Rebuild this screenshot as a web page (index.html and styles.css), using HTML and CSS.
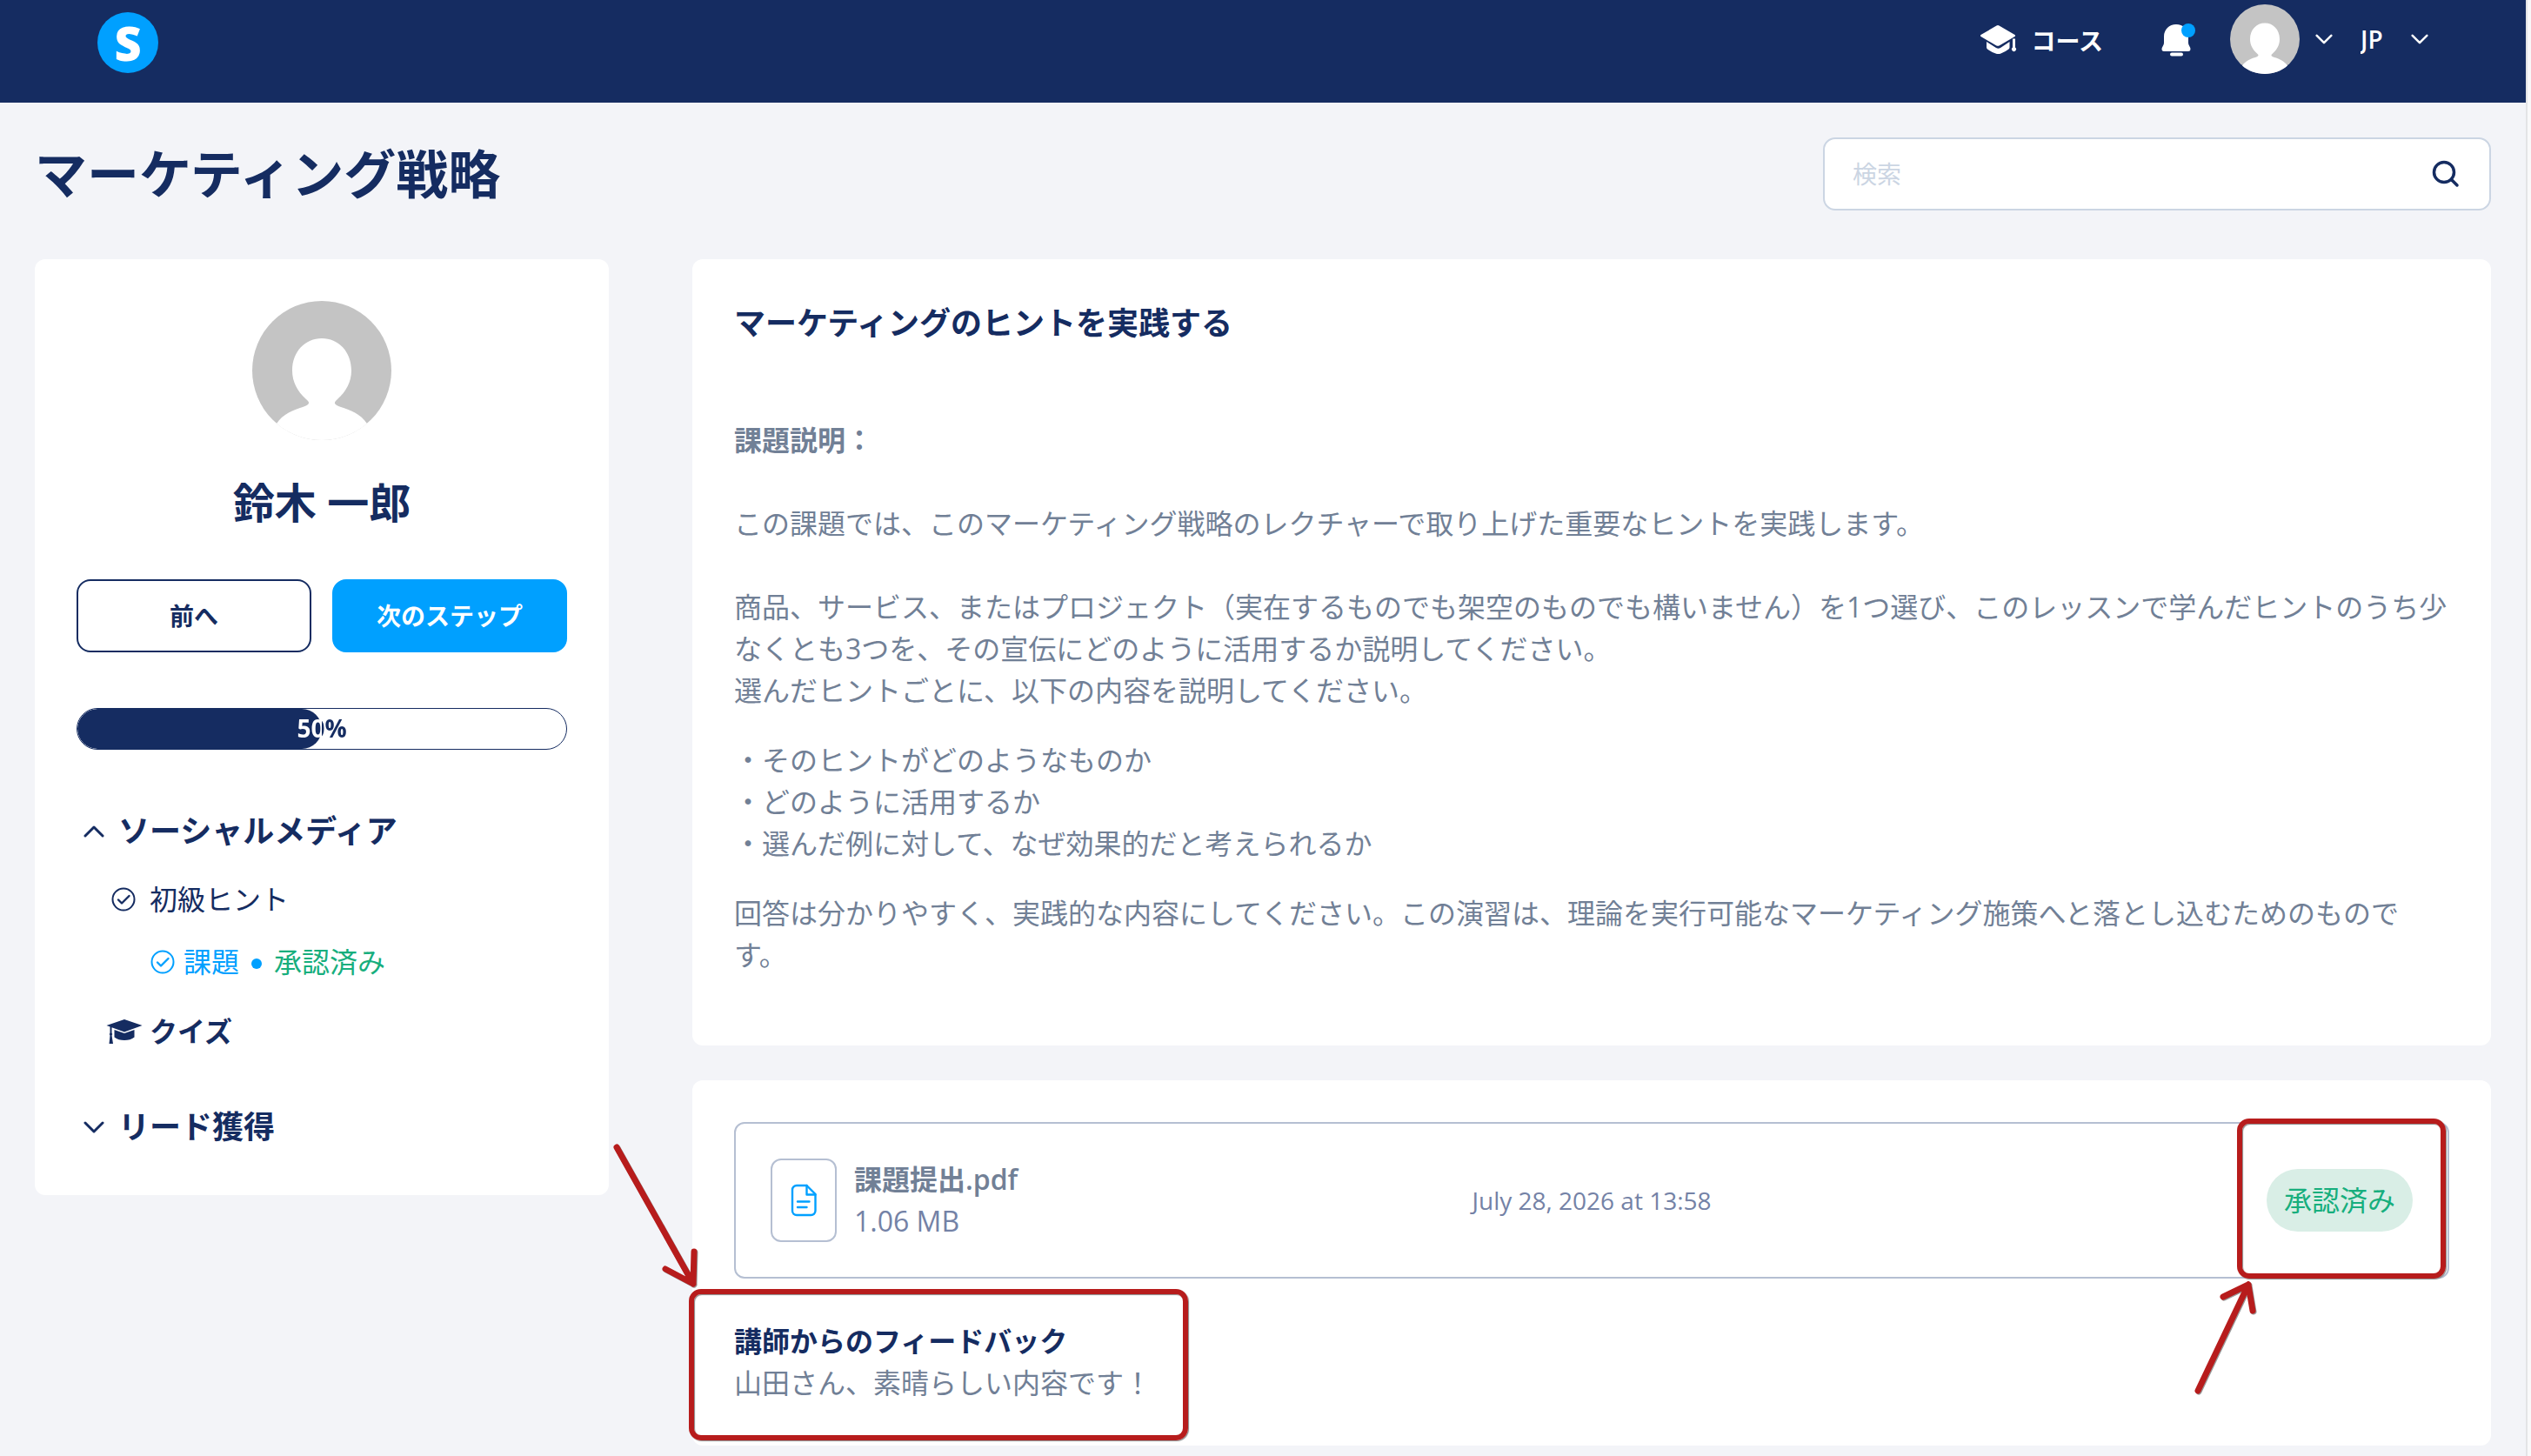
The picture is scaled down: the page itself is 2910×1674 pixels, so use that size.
FILE: index.html
```html
<!DOCTYPE html>
<html lang="ja">
<head>
<meta charset="utf-8">
<meta name="viewport" content="width=device-width, initial-scale=1">
<title>マーケティング戦略</title>
<link rel="stylesheet" href="styles.css">
</head>
<body>
<svg class="sprite" aria-hidden="true">
  <symbol id="avatar" viewBox="0 0 160 160">
    <circle cx="80" cy="80" r="80" fill="#c4c4c4"/>
    <path d="M28 141C35 130 48 125 58 122C66 119 67 117 62 113C52 104 46 93 46 80C46 58 61 43 80 43S114 58 114 80C114 93 108 104 98 113C93 117 94 119 102 122C112 125 125 130 132 141C118 153 100 160 80 160S42 153 28 141Z" fill="#fff"/>
  </symbol>
  <symbol id="chevron" viewBox="0 0 24 16">
    <path d="M2 3l10 10L22 3" fill="none" stroke="currentColor" stroke-width="3" stroke-linecap="round" stroke-linejoin="round"/>
  </symbol>
  <symbol id="check" viewBox="0 0 28 28">
    <g fill="none" stroke="currentColor" stroke-width="2" stroke-linecap="round" stroke-linejoin="round"><circle cx="14" cy="14" r="12.5"/><path d="M8 14.5l4 4 8.500-8.500" stroke-width="2.400"/></g>
  </symbol>
</svg>
<div class="page">
  <header class="topbar">
    <a class="logo" href="#" aria-label="ホーム">S</a>
    <nav class="nav">
      <a class="nav-link" href="#">
        <svg class="nav-icon" viewBox="0 0 44 44" fill="currentColor" aria-hidden="true">
          <path d="M20.500 6.500q1.500-.9 3 0l18 10.500q1.200 1 0 2L24 29.300q-2 1-4 0L2.500 19q-1.200-1 0-2z"/>
          <path d="M9 25l11 7q2.500 1.300 5 0l10.500-7v6.500q0 1.200-1 2Q30 37 25.500 38.400q-3 1-6 0Q14.500 37 10 33.500q-1-.8-1-2z"/>
          <path d="M39 21.500h3v10a2.500 2.500 0 1 1-3 0z"/>
        </svg>
        <span class="nav-text">コース</span>
      </a>
      <button class="bell" type="button" aria-label="通知">
        <svg class="nav-icon" viewBox="0 0 44 44" aria-hidden="true">
          <path fill="#fff" d="M22 5c8 0 14 6 14 14v7c0 2 1 3.500 2 5.500.8 1.500.8 4.500-2 4.500H8c-2.800 0-2.800-3-2-4.500 1-2 2-3.500 2-5.500v-7C8 11 14 5 22 5z"/>
          <rect fill="#fff" x="15" y="37.500" width="15" height="4" rx="2"/>
          <circle cx="36" cy="12" r="8" fill="#00a0ff"/>
        </svg>
      </button>
      <button class="account" type="button" aria-label="アカウント">
        <svg class="account-avatar" aria-hidden="true"><use href="#avatar"/></svg>
        <svg class="chevron-small" aria-hidden="true"><use href="#chevron"/></svg>
      </button>
      <label class="language">
        <select aria-label="言語"><option>JP</option></select>
        <svg class="chevron-small" aria-hidden="true"><use href="#chevron"/></svg>
      </label>
    </nav>
  </header>

  <main class="content">
    <div class="page-head">
      <h1>マーケティング戦略</h1>
      <form class="search" role="search">
        <input type="search" placeholder="検索" aria-label="検索">
        <button type="submit" aria-label="検索する">
          <svg viewBox="0 0 32 32" aria-hidden="true"><g fill="none" stroke="currentColor" stroke-width="3.500" stroke-linecap="round"><circle cx="14" cy="14" r="11.500"/><path d="M23 23l6 6"/></g></svg>
        </button>
      </form>
    </div>

    <div class="columns">
      <aside class="card sidebar">
        <svg class="profile-avatar" aria-hidden="true"><use href="#avatar"/></svg>
        <h2 class="profile-name">鈴木 一郎</h2>
        <div class="steps">
          <button class="btn btn-outline" type="button">前へ</button>
          <button class="btn btn-primary" type="button">次のステップ</button>
        </div>
        <div class="progress" role="progressbar" aria-valuenow="50" aria-valuemin="0" aria-valuemax="100">
          <div class="progress-fill" style="width: 50%"></div>
          <span class="progress-label">50%</span>
        </div>
        <button class="chapter" type="button" aria-expanded="true">
          <svg class="chevron chevron-up" aria-hidden="true"><use href="#chevron"/></svg>ソーシャルメディア
        </button>
        <ul class="lessons">
          <li class="lesson">
            <a href="#"><svg class="check" aria-hidden="true"><use href="#check"/></svg>初級ヒント</a>
          </li>
          <li class="task">
            <a href="#"><svg class="check" aria-hidden="true"><use href="#check"/></svg>課題</a>
            <span class="dot"></span>
            <span class="approved">承認済み</span>
          </li>
          <li class="quiz">
            <a href="#">
              <svg class="quiz-icon" viewBox="0 0 42 32" fill="currentColor" aria-hidden="true">
                <path d="M21 2L41.500 9 21 16.500 6.500 11.300v6.200q1.500 1.500 0 3L8 30H3.500l1-9.500q-1.500-1.500 0-3V10.500L.5 9z"/>
                <path d="M9.500 14L21 18l11.500-4v8.500Q28 26 21 26T9.500 22.500z"/>
              </svg>クイズ</a>
          </li>
        </ul>
        <button class="chapter" type="button" aria-expanded="false">
          <svg class="chevron" aria-hidden="true"><use href="#chevron"/></svg>リード獲得
        </button>
      </aside>

      <div class="main-column">
        <article class="card assignment">
          <h2>マーケティングのヒントを実践する</h2>
          <p><strong>課題説明：</strong><br><br>この課題では、このマーケティング戦略のレクチャーで取り上げた重要なヒントを実践します。<br><br>商品、サービス、またはプロジェクト（実在するものでも架空のものでも構いません）を1つ選び、このレッスンで学んだヒントのうち少なくとも3つを、その宣伝にどのように活用するか説明してください。<br>選んだヒントごとに、以下の内容を説明してください。</p>
          <p>・そのヒントがどのようなものか<br>・どのように活用するか<br>・選んだ例に対して、なぜ効果的だと考えられるか</p>
          <p>回答は分かりやすく、実践的な内容にしてください。この演習は、理論を実行可能なマーケティング施策へと落とし込むためのものです。</p>
        </article>

        <section class="card">
          <div class="submission">
            <div class="file">
              <span class="file-tile">
                <svg viewBox="0 0 30 38" aria-hidden="true"><g fill="none" stroke="currentColor" stroke-width="2.400" stroke-linecap="round" stroke-linejoin="round"><path d="M7 2h11.500L28.500 12v19a5 5 0 0 1-5 5H7a5 5 0 0 1-5-5V7a5 5 0 0 1 5-5z"/><path d="M18.500 2v10.500h10M8 20.500h13.500M8 27h10.500"/></g></svg>
              </span>
              <div>
                <a class="file-name" href="#">課題提出.pdf</a>
                <div class="file-size">1.06 MB</div>
              </div>
            </div>
            <time class="date" datetime="2026-07-28T13:58">July 28, 2026 at 13:58</time>
            <div class="status"><span class="badge">承認済み</span></div>
            <div class="callout callout-status"></div>
            <svg class="arrow arrow-status" viewBox="0 0 80 136" aria-hidden="true"><path d="M11 129L69 7M40 21L69 7l5 30"/></svg>
          </div>
          <div class="feedback">
            <h3>講師からのフィードバック</h3>
            <div>山田さん、素晴らしい内容です！</div>
            <div class="callout callout-feedback"></div>
            <svg class="arrow arrow-feedback" viewBox="0 0 104 170" aria-hidden="true"><path d="M7 7l88 157M63 147l32 17 1-37"/></svg>
          </div>
        </section>
      </div>
    </div>
  </main>
</div>
</body>
</html>
```

FILE: styles.css
```css
:root {
  --navy: #152c61;
  --blue: #00a0ff;
  --green: #17ae7d;
  --slate: #718096;
  --line: #b5bfd2;
  --red: #b71c1c;
}

* {
  box-sizing: border-box;
}

html {
  background: #f9f9fa;
}

body {
  margin: 0;
  color: var(--slate);
  font: 32px/48px "Open Sans", "Noto Sans CJK JP", sans-serif;
  text-spacing-trim: space-all;
}

h1, h2, h3, p, ul {
  margin: 0;
  padding: 0;
}

a {
  color: inherit;
  text-decoration: none;
}

button, input, select {
  margin: 0;
  padding: 0;
  border: 0;
  background: none;
  color: inherit;
  font: inherit;
}

svg {
  display: block;
  flex: none;
}

.sprite {
  position: absolute;
  width: 0;
  height: 0;
}

.page {
  min-height: 100vh;
  margin-right: 4px;
  border-right: 2px solid #e3e4e6;
  background: #f3f4f8;
}

/* Top bar */
.topbar {
  display: flex;
  justify-content: space-between;
  align-items: flex-start;
  height: 118px;
  padding: 5px 112px 0;
  background: var(--navy);
  color: #fff;
}

.logo {
  width: 70px;
  height: 70px;
  margin-top: 9px;
  border-radius: 50%;
  background: var(--blue);
  font-size: 54px;
  font-weight: 800;
  line-height: 70px;
  text-align: center;
}

.nav {
  display: flex;
  align-items: center;
  height: 80px;
  font-size: 28px;
  font-weight: 600;
}

.nav-link {
  display: flex;
  align-items: center;
  gap: 16px;
  margin-right: 62px;
}

.nav-text {
  padding-top: 4px;
}

.nav-icon {
  width: 44px;
  height: 44px;
}

.bell {
  margin-right: 40px;
}

.account {
  display: flex;
  align-items: center;
  gap: 18px;
  margin-right: 32px;
}

.account-avatar {
  width: 80px;
  height: 80px;
}

.chevron-small {
  width: 20px;
  height: 14px;
}

.language {
  display: flex;
  align-items: center;
}

.language select {
  width: 58px;
  appearance: none;
}

/* Page heading */
.content {
  padding: 40px 40px 12px;
}

.page-head {
  display: flex;
  justify-content: space-between;
  margin-bottom: 56px;
}

h1 {
  color: var(--navy);
  font-size: 60px;
  line-height: 84px;
}

.search {
  display: flex;
  align-items: center;
  width: 768px;
  height: 84px;
  padding: 0 34px 0 32px;
  border: 2px solid #cbd5e3;
  border-radius: 14px;
  background: #fff;
  font-size: 28px;
}

.search input {
  flex: 1;
  min-width: 0;
  outline: 0;
}

.search input::placeholder {
  color: #cbd5e3;
}

.search svg {
  width: 32px;
  height: 32px;
  color: var(--navy);
}

/* Columns */
.columns {
  display: grid;
  grid-template-columns: 660px minmax(0, 1fr);
  gap: 96px;
  align-items: start;
}

.main-column {
  display: grid;
  gap: 40px;
}

.card {
  padding: 48px;
  border-radius: 12px;
  background: #fff;
}

/* Sidebar */
.sidebar {
  padding-bottom: 52px;
  color: var(--navy);
}

.profile-avatar {
  width: 160px;
  height: 160px;
  margin: 0 auto 36px;
}

.profile-name {
  margin-bottom: 52px;
  font-size: 48px;
  line-height: 72px;
  text-align: center;
}

.steps {
  display: grid;
  grid-template-columns: 1fr 1fr;
  gap: 24px;
  margin-bottom: 64px;
}

.btn {
  height: 84px;
  border: 2px solid var(--navy);
  border-radius: 16px;
  font-size: 28px;
  font-weight: 700;
}

.btn-primary {
  border-color: var(--blue);
  background: var(--blue);
  color: #fff;
}

.progress {
  display: grid;
  height: 48px;
  margin-bottom: 68px;
  border: 1px solid var(--navy);
  border-radius: 24px;
  overflow: hidden;
}

.progress-fill,
.progress-label {
  grid-area: 1 / 1;
}

.progress-fill {
  border-radius: 24px;
  background: var(--navy);
}

.progress-label {
  background: linear-gradient(to right, #fff 50%, var(--navy) 50%);
  background-clip: text;
  color: transparent;
  font-size: 28px;
  font-weight: 700;
  line-height: 44px;
  text-align: center;
}

.chapter {
  display: flex;
  align-items: center;
  gap: 16px;
  padding-left: 8px;
  font-size: 36px;
  font-weight: 700;
  line-height: 52px;
}

.chevron {
  width: 24px;
  height: 16px;
}

.chevron-up {
  transform: rotate(180deg);
}

.lessons {
  margin: 28px 0 60px;
  list-style: none;
}

.lessons li,
.lessons a {
  display: flex;
  align-items: center;
}

.check {
  width: 28px;
  height: 28px;
}

.lesson {
  padding-left: 40px;
}

.lesson a {
  gap: 16px;
}

.task {
  margin: 24px 0 32px;
  padding-left: 85px;
  color: var(--blue);
}

.task a {
  gap: 10px;
}

.dot {
  width: 12px;
  height: 12px;
  margin: 4px 14px 0;
  border-radius: 50%;
  background: currentColor;
}

.approved {
  color: var(--green);
}

.quiz {
  padding-left: 34px;
  font-weight: 700;
}

.quiz a {
  gap: 8px;
}

.quiz-icon {
  width: 42px;
  height: 32px;
}

/* Assignment text */
.assignment h2 {
  margin-bottom: 84px;
  color: var(--navy);
  font-size: 36px;
  line-height: 52px;
}

.assignment p {
  margin-bottom: 32px;
}

/* Submission */
.submission {
  position: relative;
  display: grid;
  grid-template-columns: 1fr auto 1fr;
  align-items: center;
  margin-bottom: 48px;
  padding: 40px;
  border: 2px solid var(--line);
  border-radius: 12px;
}

.file {
  display: flex;
  gap: 20px;
}

.file-tile {
  display: grid;
  place-items: center;
  width: 76px;
  height: 96px;
  border: 2px solid var(--line);
  border-radius: 12px;
  color: var(--blue);
}

.file-tile svg {
  width: 30px;
  height: 38px;
}

.file-name {
  font-weight: 600;
}

.file-size,
.date {
  color: #7482a6;
}

.date {
  font-size: 28px;
}

.status {
  text-align: right;
}

.badge {
  display: inline-block;
  padding: 12px 20px;
  border-radius: 36px;
  background: #d9eee6;
  color: var(--green);
}

.feedback {
  position: relative;
}

.feedback h3 {
  color: var(--navy);
  font-size: 32px;
}

/* Red annotations laid over the submission */
.callout {
  position: absolute;
  border: 6px solid var(--red);
  border-radius: 14px;
  box-shadow: 1px 1px 1px #888, inset 1px 1px 1px #888;
}

.callout-status {
  top: -6px;
  right: 2px;
  bottom: -2px;
  width: 240px;
}

.callout-feedback {
  top: -36px;
  bottom: -42px;
  left: -52px;
  width: 574px;
}

.arrow {
  position: absolute;
  fill: none;
  stroke: var(--red);
  stroke-width: 7px;
  stroke-linecap: round;
  stroke-linejoin: round;
  filter: drop-shadow(1px 1px 0 #999);
}

.arrow-status {
  top: 178px;
  right: 218px;
  width: 80px;
  height: 136px;
}

.arrow-feedback {
  top: -206px;
  left: -142px;
  width: 104px;
  height: 170px;
}
```
